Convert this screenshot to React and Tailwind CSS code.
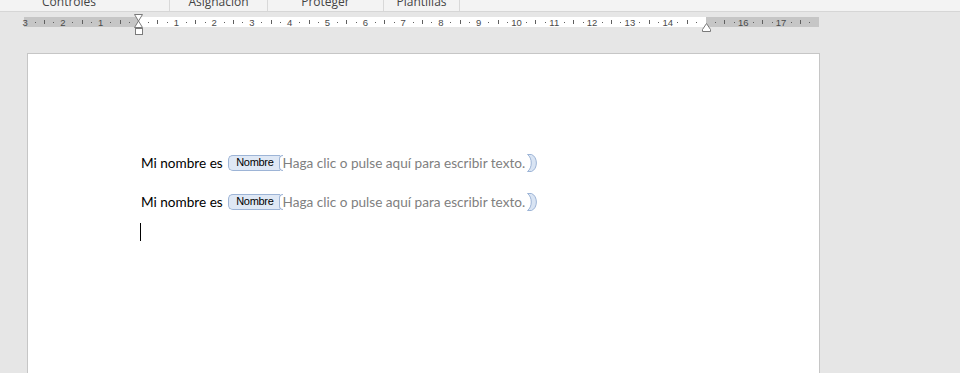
import React from "react";

function Ruler() {
  const x0 = 114.5;
  const cm = 37.8;
  const ticks = [];
  for (let k = -12; k <= 80; k++) {
    const x = x0 + (k * cm) / 4;
    if (x < 0 || x > 791) continue;
    const m = ((k % 4) + 4) % 4;
    if (m === 0) {
      const n = Math.abs(k / 4);
      if (n === 0 || k === 60) continue;
      ticks.push(
        <text key={k} x={x} y={12.5} textAnchor="middle" fontSize="9.5" fill="#4a4a4a" fontFamily="'Liberation Sans', Arial, sans-serif">
          {n}
        </text>
      );
    } else if (m === 2) {
      ticks.push(<rect key={k} x={Math.round(x)} y={7} width={1} height={4} fill="#606060" />);
    } else {
      ticks.push(<rect key={k} x={Math.round(x)} y={9} width={1} height={1} fill="#606060" />);
    }
  }
  return (
    <svg width="800" height="24" viewBox="0 0 800 24" className="block overflow-visible">
      <rect x="0" y="4" width="795" height="10" fill="#c6c6c6" />
      <rect x="114" y="4" width="568" height="10" fill="#ffffff" />
      {ticks}
      <path d="M110.5 1.5 H118.5 L114.5 8 L118.5 14.5 H110.5 L114.5 8 Z" fill="#ffffff" stroke="#7a7a7a" strokeWidth="1" />
      <rect x="111.5" y="15.5" width="7" height="6" fill="#ffffff" stroke="#7a7a7a" strokeWidth="1" />
      <path d="M678.5 16.5 L682.5 10.5 L686.5 16.5 V18.5 H678.5 Z" fill="#ffffff" stroke="#7a7a7a" strokeWidth="1" />
    </svg>
  );
}

function ContentControl() {
  return (
    <span className="inline-flex items-center ml-[2px]">
      <span className="flex items-center h-[16px] pl-[7px] pr-[6px] bg-[#dfe8f5] border border-r-0 border-[#9db4d6] rounded-l-[5px] text-[11px] leading-none text-black" style={{ fontFamily: "'Liberation Sans Narrow', 'Liberation Sans', Arial, sans-serif", letterSpacing: "-0.3px" }}>
        Nombre
      </span>
      <span className="h-[16px] w-[4px] border-l border-y border-[#9db4d6] rounded-l-[6px] bg-white -ml-[1px]" />
      <span className="text-[#808080]">Haga clic o pulse aquí para escribir texto.</span>
      <svg width="12" height="18" viewBox="0 0 12 18" className="ml-[2px]">
        <path d="M0.5 0.5 H4.5 C11 3 11 15 4.5 17.5 H0.5 C5.5 14 5.5 4 0.5 0.5 Z" fill="#d9e4f3" stroke="#9db4d6" strokeWidth="1" />
      </svg>
    </span>
  );
}

export default function App() {
  const font = { fontFamily: "Lato, 'Open Sans', sans-serif" };
  return (
    <div className="w-[960px] h-[373px] overflow-hidden bg-[#e6e6e6] flex flex-col">
      <div className="h-[12px] shrink-0 bg-[#f3f3f3] border-b border-[#d6d6d6] overflow-hidden">
        <div className="flex items-center h-[18px] -mt-[7px] text-[12px] text-[#444]" style={{ fontFamily: "'Open Sans', sans-serif" }}>
          <div className="w-[170px] pl-[42px] h-full flex items-center border-r border-[#d8d8d8]">Controles</div>
          <div className="w-[98px] h-full flex items-center justify-center border-r border-[#d8d8d8]">Asignación</div>
          <div className="w-[116px] h-full flex items-center justify-center border-r border-[#d8d8d8]">Proteger</div>
          <div className="w-[76px] h-full flex items-center justify-center border-r border-[#d8d8d8]">Plantillas</div>
        </div>
      </div>
      <div className="mt-[1px] ml-[24px] h-[24px] shrink-0">
        <Ruler />
      </div>
      <div className="mt-[16px] ml-[27px] w-[793px] flex-1 bg-white border border-b-0 border-[#c6c6c6] pl-[113px] pt-[98px] text-[13.6px] text-black" style={font}>
        <div className="h-[22px] flex items-center whitespace-pre">
          <span>Mi nombre es </span>
          <ContentControl />
        </div>
        <div className="h-[22px] mt-[17px] flex items-center whitespace-pre">
          <span>Mi nombre es </span>
          <ContentControl />
        </div>
        <div className="h-[22px] mt-[8px] flex items-center">
          <div className="w-[1px] h-[18px] bg-black -ml-[1px]" />
        </div>
      </div>
    </div>
  );
}
